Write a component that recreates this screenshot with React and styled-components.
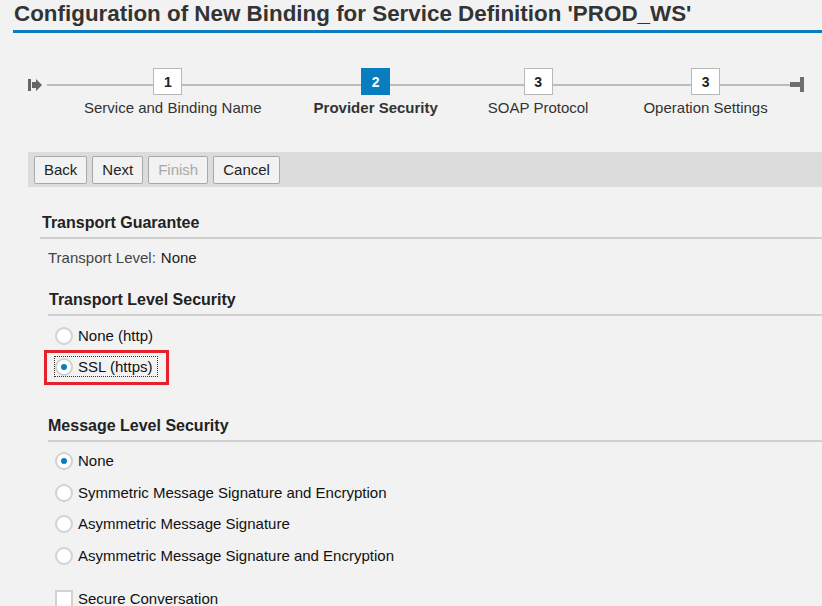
import React from 'react';
import styled, { createGlobalStyle } from 'styled-components';

const GlobalStyle = createGlobalStyle`
  html, body {
    margin: 0;
    padding: 0;
    background: #f2f2f2;
    font-family: "Liberation Sans", Arial, sans-serif;
    color: #222;
  }
`;

const Page = styled.div`
  width: 822px;
  height: 606px;
  overflow: hidden;
  background: #f2f2f2;
`;

const Header = styled.div`
  margin-left: 13px;
  border-bottom: 3px solid #0a7cc0;
  height: 33px;
  box-sizing: border-box;
`;

const Title = styled.h1`
  margin: 0;
  padding: 1px 0 0 1px;
  font-size: 22.4px;
  font-weight: bold;
  color: #333;
  line-height: 26px;
  white-space: nowrap;
`;

const Stepper = styled.div`
  position: relative;
  margin: 35px 16px 0 28px;
  height: 84px;
`;

const Rail = styled.div`
  position: absolute;
  left: 0;
  right: 0;
  top: 9px;
  display: flex;
  align-items: center;
`;

const RailLine = styled.div`
  flex: 1;
  height: 2px;
  background: #bcbcbc;
`;

const Steps = styled.div`
  position: relative;
  display: flex;
  padding-left: 56px;
`;

const Step = styled.div`
  display: flex;
  flex-direction: column;
  align-items: center;
  margin-left: ${p => p.$gap || 0}px;
`;

const StepBox = styled.div`
  width: 29px;
  height: 27px;
  box-sizing: border-box;
  border: 1px solid ${p => (p.$active ? '#0a7cc0' : '#b8b8b8')};
  background: ${p => (p.$active ? '#0a7cc0' : '#fff')};
  color: ${p => (p.$active ? '#fff' : '#222')};
  font-size: 14px;
  font-weight: bold;
  display: flex;
  align-items: center;
  justify-content: center;
  margin-right: ${p => p.$shift || 0}px;
`;

const StepLabel = styled.div`
  margin-top: 4px;
  font-size: 15px;
  line-height: 18px;
  color: #333;
  font-weight: ${p => (p.$active ? 'bold' : 'normal')};
  white-space: nowrap;
`;

const Toolbar = styled.div`
  margin-left: 28px;
  height: 35px;
  background: #dcdcdc;
  display: flex;
  align-items: center;
  gap: 5px;
  padding-left: 6px;
`;

const Button = styled.button`
  height: 28px;
  padding: 0 ${p => p.$pad || 9}px;
  font-family: "Liberation Sans", Arial, sans-serif;
  font-size: 15px;
  color: ${p => (p.disabled ? '#a8a8a8' : '#222')};
  background: #f2f2f2;
  border: 1px solid #a9a9a9;
  border-radius: 2px;
`;

const Section = styled.div`
  margin-left: ${p => p.$left || 48}px;
  margin-top: ${p => p.$top || 0}px;
`;

const SectionTitle = styled.div`
  font-size: 16px;
  font-weight: bold;
  color: #222;
  line-height: 20px;
  padding: 0 0 4px ${p => p.$indent || 0}px;
  border-bottom: 2px solid #cfcfcf;
`;

const InfoRow = styled.div`
  display: flex;
  gap: 5px;
  font-size: 15px;
  padding: 9px 0 0 8px;
  line-height: 20px;
`;

const InfoLabel = styled.span`
  color: #444;
`;

const OptionList = styled.div`
  display: flex;
  flex-direction: column;
  gap: ${p => p.$gap || 11}px;
  padding: ${p => p.$top || 12}px 0 0 7px;
`;

const Option = styled.label`
  display: flex;
  align-items: center;
  gap: 5px;
  font-size: 15px;
  line-height: 20px;
  color: #111;
  margin-top: ${p => p.$top || 0}px;
`;

const Radio = styled.span`
  width: 18px;
  height: 18px;
  box-sizing: border-box;
  border-radius: 50%;
  border: 2px solid #d2d2d2;
  background: #fff;
  display: flex;
  align-items: center;
  justify-content: center;
  &::after {
    content: '';
    width: 6px;
    height: 6px;
    border-radius: 50%;
    background: ${p => (p.$checked ? '#0a7cc0' : 'transparent')};
  }
`;

const Checkbox = styled.span`
  width: 18px;
  height: 18px;
  box-sizing: border-box;
  border: 2px solid #d2d2d2;
  background: #fff;
`;

const Highlight = styled.div`
  align-self: flex-start;
  margin-left: -11px;
  border: 3px solid #e8202a;
  padding: 4px 9px 6px 8px;
`;

const Focus = styled.span`
  display: flex;
  align-items: center;
  gap: 5px;
  height: 19px;
  font-size: 15px;
  color: #111;
  outline: 1px dotted #333;
  padding-right: 5px;
`;

const StartIcon = () => (
  <svg width="19" height="14" viewBox="0 0 19 14">
    <rect x="0" y="1" width="3" height="12" fill="#666" />
    <path d="M4 4 H8 V1 L14 7 L8 13 V10 H4 Z" fill="#666" />
  </svg>
);

const EndIcon = () => (
  <svg width="16" height="16" viewBox="0 0 16 16">
    <rect x="0" y="5" width="12" height="5" fill="#6e6e6e" />
    <rect x="10" y="0" width="4" height="15" fill="#6e6e6e" />
  </svg>
);

const steps = [
  { n: '1', label: 'Service and Binding Name', shift: 10, gap: 0 },
  { n: '2', label: 'Provider Security', active: true, gap: 52 },
  { n: '3', label: 'SOAP Protocol', gap: 50 },
  { n: '3', label: 'Operation Settings', gap: 55 },
];

const messageOptions = [
  { label: 'None', checked: true },
  { label: 'Symmetric Message Signature and Encryption' },
  { label: 'Asymmetric Message Signature' },
  { label: 'Asymmetric Message Signature and Encryption' },
];

export default function App() {
  return (
    <Page>
      <GlobalStyle />
      <Header>
        <Title>Configuration of New Binding for Service Definition 'PROD_WS'</Title>
      </Header>

      <Stepper>
        <Rail>
          <StartIcon />
          <RailLine />
          <EndIcon />
        </Rail>
        <Steps>
          {steps.map((s, i) => (
            <Step key={i} $gap={s.gap}>
              <StepBox $active={s.active} $shift={s.shift}>{s.n}</StepBox>
              <StepLabel $active={s.active}>{s.label}</StepLabel>
            </Step>
          ))}
        </Steps>
      </Stepper>

      <Toolbar>
        <Button $pad={9}>Back</Button>
        <Button $pad={9}>Next</Button>
        <Button $pad={9} disabled>Finish</Button>
        <Button $pad={9}>Cancel</Button>
      </Toolbar>

      <Section $left={40} $top={26}>
        <SectionTitle $indent={2}>Transport Guarantee</SectionTitle>
        <InfoRow>
          <InfoLabel>Transport Level:</InfoLabel>
          <span>None</span>
        </InfoRow>
      </Section>

      <Section $top={22}>
        <SectionTitle $indent={1}>Transport Level Security</SectionTitle>
        <OptionList $gap={4} $top={10}>
          <Option>
            <Radio />
            None (http)
          </Option>
          <Highlight>
            <Focus>
              <Radio $checked />
              SSL (https)
            </Focus>
          </Highlight>
        </OptionList>
      </Section>

      <Section $top={31}>
        <SectionTitle>Message Level Security</SectionTitle>
        <OptionList $gap={11.5} $top={9}>
          {messageOptions.map((o, i) => (
            <Option key={i}>
              <Radio $checked={o.checked} />
              {o.label}
            </Option>
          ))}
          <Option $top={12}>
            <Checkbox />
            Secure Conversation
          </Option>
        </OptionList>
      </Section>
    </Page>
  );
}
